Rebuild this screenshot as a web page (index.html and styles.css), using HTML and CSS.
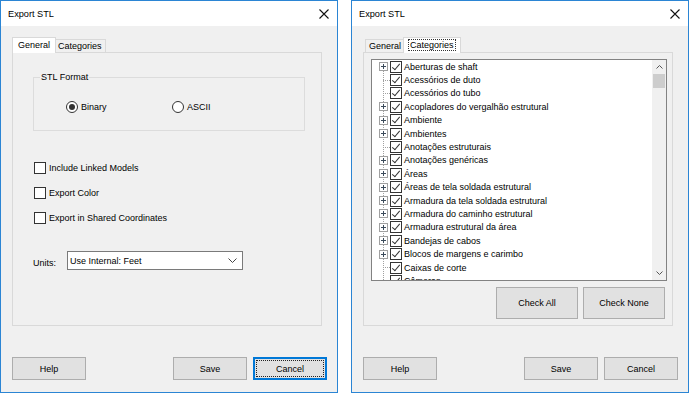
FILE: index.html
```html
<!DOCTYPE html>
<html lang="pt">
<head>
    <meta charset="UTF-8">
    <title>Export STL</title>
    <link rel="stylesheet" href="styles.css">
</head>
<body>
    <div class="desk">
        <!-- General tab -->
        <div class="window">
            <div class="titlebar">
                <span class="title">Export STL</span>
                <svg class="close" width="10" height="10" viewBox="0 0 10 10"><path d="M0.5 0.5L9.5 9.5M9.5 0.5L0.5 9.5" stroke="#111" stroke-width="1.1"/></svg>
            </div>
            <div class="content">
                <div class="tabs">
                    <div class="tab active">General</div>
                    <div class="tab">Categories</div>
                </div>
                <div class="panel">
                    <fieldset class="group">
                        <legend>STL Format</legend>
                        <div class="radios">
                            <label class="radio first"><span class="dot on"></span>Binary</label>
                            <label class="radio"><span class="dot"></span>ASCII</label>
                        </div>
                    </fieldset>
                    <div class="checks">
                        <label class="check"><span class="box"></span>Include Linked Models</label>
                        <label class="check"><span class="box"></span>Export Color</label>
                        <label class="check"><span class="box"></span>Export in Shared Coordinates</label>
                    </div>
                    <div class="units">
                        <span class="units-label">Units:</span>
                        <div class="select">
                            <span>Use Internal: Feet</span>
                            <svg width="9" height="5" viewBox="0 0 9 5"><path d="M0.5 0.5L4.5 4.5L8.5 0.5" fill="none" stroke="#444"/></svg>
                        </div>
                    </div>
                </div>
                <div class="footer">
                    <button class="btn">Help</button>
                    <button class="btn push">Save</button>
                    <button class="btn focused">Cancel</button>
                </div>
            </div>
        </div>

        <!-- Categories tab -->
        <div class="window">
            <div class="titlebar">
                <span class="title">Export STL</span>
                <svg class="close" width="10" height="10" viewBox="0 0 10 10"><path d="M0.5 0.5L9.5 9.5M9.5 0.5L0.5 9.5" stroke="#111" stroke-width="1.1"/></svg>
            </div>
            <div class="content">
                <div class="tabs">
                    <div class="tab">General</div>
                    <div class="tab active"><span class="focus">Categories</span></div>
                </div>
                <div class="panel">
                    <div class="listbox">
                        <div class="tree">
                            <div class="node"><span class="exp"></span><span class="cb"></span>Aberturas de shaft</div>
                            <div class="node"><span class="exp leaf"></span><span class="cb"></span>Acessórios de duto</div>
                            <div class="node"><span class="exp leaf"></span><span class="cb"></span>Acessórios do tubo</div>
                            <div class="node"><span class="exp"></span><span class="cb"></span>Acopladores do vergalhão estrutural</div>
                            <div class="node"><span class="exp"></span><span class="cb"></span>Ambiente</div>
                            <div class="node"><span class="exp"></span><span class="cb"></span>Ambientes</div>
                            <div class="node"><span class="exp leaf"></span><span class="cb"></span>Anotações estruturais</div>
                            <div class="node"><span class="exp"></span><span class="cb"></span>Anotações genéricas</div>
                            <div class="node"><span class="exp"></span><span class="cb"></span>Áreas</div>
                            <div class="node"><span class="exp"></span><span class="cb"></span>Áreas de tela soldada estrutural</div>
                            <div class="node"><span class="exp"></span><span class="cb"></span>Armadura da tela soldada estrutural</div>
                            <div class="node"><span class="exp"></span><span class="cb"></span>Armadura do caminho estrutural</div>
                            <div class="node"><span class="exp"></span><span class="cb"></span>Armadura estrutural da área</div>
                            <div class="node"><span class="exp"></span><span class="cb"></span>Bandejas de cabos</div>
                            <div class="node"><span class="exp"></span><span class="cb"></span>Blocos de margens e carimbo</div>
                            <div class="node"><span class="exp leaf"></span><span class="cb"></span>Caixas de corte</div>
                            <div class="node"><span class="exp leaf"></span><span class="cb"></span>Câmeras</div>
                        </div>
                        <div class="vscroll">
                            <div class="arrow"><svg width="7" height="4" viewBox="0 0 7 4"><path d="M0.5 3.5L3.5 0.5L6.5 3.5" fill="none" stroke="#555"/></svg></div>
                            <div class="thumb"></div>
                            <div class="track"></div>
                            <div class="arrow"><svg width="7" height="4" viewBox="0 0 7 4"><path d="M0.5 0.5L3.5 3.5L6.5 0.5" fill="none" stroke="#555"/></svg></div>
                        </div>
                    </div>
                    <div class="list-buttons">
                        <button class="btn tall">Check All</button>
                        <button class="btn tall">Check None</button>
                    </div>
                </div>
                <div class="footer">
                    <button class="btn">Help</button>
                    <button class="btn push">Save</button>
                    <button class="btn">Cancel</button>
                </div>
            </div>
        </div>
    </div>
</body>
</html>
```

FILE: styles.css
```css
body {
    margin: 0;
    background-color: #ffffff;
    font: 9px "Liberation Sans", Arial, sans-serif;
    color: #000;
}
.desk {
    display: flex;
    gap: 13px;
}
.window {
    width: 338px;
    height: 393px;
    box-sizing: border-box;
    border: 1px solid #2b85d4;
    background-color: #f0f0f0;
    display: flex;
    flex-direction: column;
}
.titlebar {
    height: 25px;
    flex: none;
    background-color: #ffffff;
    display: flex;
    align-items: center;
    justify-content: space-between;
    padding: 0 8px 0 7px;
}
.title {
    font-size: 9.2px;
}
.content {
    flex: 1;
    padding: 11px 10px 0 11px;
    display: flex;
    flex-direction: column;
}

/* tabs */
.tabs {
    display: flex;
    align-items: flex-end;
    height: 15px;
    padding-left: 2px;
}
.tab {
    height: 13px;
    box-sizing: border-box;
    border: 1px solid #d9d9d9;
    border-bottom: 0;
    padding: 0 3px;
    line-height: 12px;
    background-color: #f0f0f0;
}
.tab.active {
    height: 16px;
    margin: 0 -2px -1px;
    padding: 0 5px;
    line-height: 14px;
    background-color: #ffffff;
    position: relative;
    z-index: 1;
}
.focus {
    outline: 1px dotted #333;
    outline-offset: 0;
    padding: 0 1px;
}
.panel {
    width: 310px;
    height: 274px;
    box-sizing: border-box;
    border: 1px solid #d9d9d9;
    background-color: #f0f0f0;
}

/* general */
.group {
    width: 272px;
    height: 59px;
    box-sizing: border-box;
    margin: 19px 0 0 20px;
    padding: 0 0 0 6px;
    border: 1px solid #dcdcdc;
}
.group legend {
    padding: 0 1px;
    line-height: 11px;
}
.radios {
    display: flex;
    padding: 17px 0 0 26px;
}
.radio {
    display: flex;
    align-items: center;
    height: 13px;
}
.radio.first {
    width: 106px;
}
.dot {
    width: 12px;
    height: 12px;
    box-sizing: border-box;
    border: 1px solid #333;
    border-radius: 50%;
    background-color: #fff;
    margin-right: 3px;
    display: flex;
    align-items: center;
    justify-content: center;
}
.dot.on::after {
    content: "";
    width: 6px;
    height: 6px;
    border-radius: 50%;
    background-color: #333;
}
.checks {
    display: flex;
    flex-direction: column;
    gap: 13px;
    margin: 31px 0 0 21px;
}
.check {
    display: flex;
    align-items: center;
    height: 12px;
}
.box {
    width: 12px;
    height: 12px;
    box-sizing: border-box;
    border: 1px solid #333;
    background-color: #fff;
    margin-right: 3px;
}
.units {
    display: flex;
    align-items: flex-end;
    margin: 27px 0 0 20px;
}
.units-label {
    width: 34px;
    line-height: 11px;
    margin-bottom: 1px;
}
.select {
    width: 176px;
    height: 19px;
    box-sizing: border-box;
    border: 1px solid #7a7a7a;
    background-color: #fff;
    display: flex;
    align-items: center;
    justify-content: space-between;
    padding: 0 5px 0 2px;
}

/* categories */
.listbox {
    width: 296px;
    height: 222px;
    box-sizing: border-box;
    margin: 6px 0 0 7px;
    border: 1px solid #828282;
    background-color: #fff;
    display: flex;
}
.tree {
    flex: 1;
    overflow: hidden;
    position: relative;
}
.tree::before {
    content: "";
    position: absolute;
    left: 11px;
    top: 6px;
    bottom: 0;
    border-left: 1px dotted #a0a0a0;
}
.node {
    height: 13.4px;
    display: flex;
    align-items: center;
    padding-left: 7px;
    white-space: nowrap;
}
.exp {
    width: 9px;
    height: 9px;
    box-sizing: border-box;
    border: 1px solid #a0a0a0;
    margin-right: 2px;
    position: relative;
    z-index: 1;
    background: linear-gradient(#3b4a5a, #3b4a5a) center / 5px 1px no-repeat,
                linear-gradient(#3b4a5a, #3b4a5a) center / 1px 5px no-repeat,
                #fff;
}
.exp.leaf {
    border: 0;
    background: none;
}
.exp.leaf::after {
    content: "";
    display: block;
    margin: 4px 0 0 4px;
    width: 7px;
    border-top: 1px dotted #a0a0a0;
}
.cb {
    width: 12px;
    height: 12px;
    box-sizing: border-box;
    border: 1px solid #333;
    margin-right: 2px;
    display: flex;
    justify-content: center;
}
.cb::after {
    content: "";
    width: 3px;
    height: 7px;
    margin-top: 0;
    border: solid #333;
    border-width: 0 1px 1px 0;
    transform: rotate(40deg);
}
.vscroll {
    width: 14px;
    background-color: #f0f0f0;
    display: flex;
    flex-direction: column;
}
.arrow {
    height: 14px;
    display: flex;
    align-items: center;
    justify-content: center;
}
.thumb {
    height: 14px;
    margin: 0 1px;
    background-color: #cdcdcd;
}
.track {
    flex: 1;
}
.list-buttons {
    display: flex;
    justify-content: flex-end;
    gap: 5px;
    width: 296px;
    margin: 6px 0 0 7px;
    padding-right: 2px;
    box-sizing: border-box;
}

/* buttons */
.btn {
    width: 74px;
    height: 23px;
    box-sizing: border-box;
    padding: 0;
    border: 1px solid #adadad;
    background-color: #e1e1e1;
    font: inherit;
    color: #000;
}
.btn.tall {
    width: 82px;
    height: 32px;
}
.btn.focused {
    border-color: #0078d7;
    box-shadow: inset 0 0 0 1px #0078d7;
    outline: 1px dotted #222;
    outline-offset: -4px;
}
.footer {
    display: flex;
    gap: 6px;
    margin-top: 31px;
}
.push {
    margin-left: auto;
}
```
